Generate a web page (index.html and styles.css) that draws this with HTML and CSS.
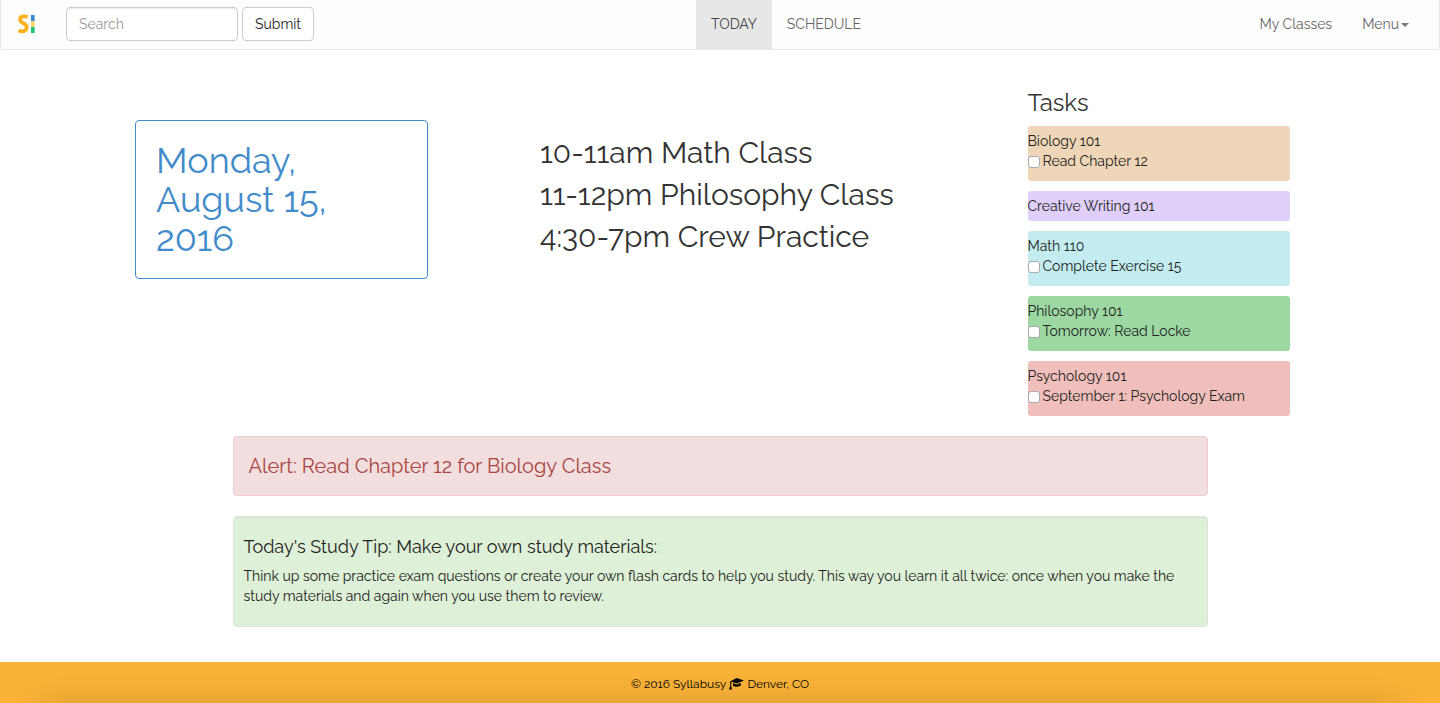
FILE: index.html
```html
<!DOCTYPE html>
<html lang="en">
<head>
<meta charset="utf-8">
<title>Syllabusy</title>
<link rel="stylesheet" href="styles.css">
</head>
<body>
<nav class="navbar">
  <div class="nav-left">
    <a class="brand" href="#" aria-label="Syllabusy">
      <svg width="18" height="20" viewBox="0 0 18 20">
        <path d="M9.6 3.1C7.4 2.1 2.1 1.6 2.1 5.6C2.1 9.8 8.7 8.8 8.7 13.2C8.7 18 3 18 0.6 16.4" fill="none" stroke="#fdb31e" stroke-width="3.8"/>
        <path d="M13 1h3.6v6H13z" fill="#3a87cf"/>
        <path d="M13 7h3.6v6H13z" fill="#fbd96c"/>
        <path d="M13 13h3.6v6H13z" fill="#1cc46f"/>
      </svg>
    </a>
    <form class="search">
      <input class="field" type="text" placeholder="Search" aria-label="Search">
      <button class="submit" type="button">Submit</button>
    </form>
  </div>
  <div class="nav-center">
    <a class="nav-link active" href="#">TODAY</a>
    <a class="nav-link" href="#">SCHEDULE</a>
  </div>
  <div class="nav-right">
    <a class="nav-link" href="#">My Classes</a>
    <a class="nav-link" href="#">Menu<span class="caret"></span></a>
  </div>
</nav>
<main class="container">
  <section class="date-panel">
    <h1 class="date">Monday, August 15, 2016</h1>
  </section>
  <section class="agenda">
    <p class="event">10-11am Math Class</p>
    <p class="event">11-12pm Philosophy Class</p>
    <p class="event">4:30-7pm Crew Practice</p>
  </section>
  <section class="tasks">
    <h2 class="tasks-title">Tasks</h2>
    <div class="task biology">
      <div>Biology 101</div>
      <label class="todo"><input class="check" type="checkbox">Read Chapter 12</label>
    </div>
    <div class="task writing">
      <div>Creative Writing 101</div>
    </div>
    <div class="task math">
      <div>Math 110</div>
      <label class="todo"><input class="check" type="checkbox">Complete Exercise 15</label>
    </div>
    <div class="task philosophy">
      <div>Philosophy 101</div>
      <label class="todo"><input class="check" type="checkbox">Tomorrow: Read Locke</label>
    </div>
    <div class="task psychology">
      <div>Psychology 101</div>
      <label class="todo"><input class="check" type="checkbox">September 1: Psychology Exam</label>
    </div>
  </section>
  <div class="alert" role="alert">Alert: Read Chapter 12 for Biology Class</div>
  <section class="tip">
    <h3 class="tip-title">Today's Study Tip: Make your own study materials:</h3>
    <p class="tip-text">Think up some practice exam questions or create your own flash cards to help you study. This way you learn it all twice: once when you make the study materials and again when you use them to review.</p>
  </section>
</main>
<footer class="footer">
  <span>© 2016 Syllabusy</span>
  <svg width="15" height="12" viewBox="0 0 15 12">
    <path d="M7.6 0L15 2.6L8 5.6L1.2 3.4z"/>
    <path d="M4 5.2L8 6.6L11.8 5V7.6C10.6 9 6 9.2 4 7.8z"/>
    <path d="M1.2 3.4H2.4L2.2 8L3 11.6H0L1.2 8z"/>
  </svg>
  <span>Denver, CO</span>
</footer>
</body>
</html>
```
FILE: styles.css
```css
* { box-sizing: border-box; }

body {
  margin: 0;
  min-height: 100vh;
  display: flex;
  flex-direction: column;
  background: #fff;
  color: #333;
  font: 14px/20px Raleway, Lato, sans-serif;
}

h1, h2, h3, p { margin: 0; font-weight: inherit; }

.navbar {
  display: grid;
  grid-template-columns: 1fr auto 1fr;
  background: #fdfdfd;
  border: 1px solid #e7e7e7;
  border-top: 0;
  border-radius: 0 0 4px 4px;
}

.nav-left { display: flex; align-items: flex-start; padding: 7px 0 7px 17px; }
.brand { display: flex; width: 48px; padding-top: 7px; }
.search { display: flex; gap: 4px; }

.field, .submit {
  height: 34px;
  padding: 6px 12px;
  border: 1px solid #ccc;
  border-radius: 4px;
  background: #fff;
  font: inherit;
}

.field { width: 172px; box-shadow: inset 0 1px 1px rgba(0, 0, 0, .08); }
.field::placeholder { color: #999; }
.submit { width: 72px; padding: 6px 0; color: #222; }

.nav-center, .nav-right { display: flex; }
.nav-center { padding-left: 132px; }
.nav-right { justify-content: flex-end; padding-right: 15px; }
.nav-link { padding: 14px 15px 15px; color: #666; text-decoration: none; }
.active { background: #e7e7e7; color: #444; }

.caret {
  display: inline-block;
  margin-left: 2px;
  vertical-align: middle;
  border: 4px solid transparent;
  border-top-color: #777;
  border-bottom: 0;
}

.container {
  display: grid;
  grid-template-columns: repeat(12, 1fr);
  row-gap: 20px;
  align-items: start;
  align-content: start;
  flex: 1;
  width: 100%;
  max-width: 1170px;
  margin: 0 auto;
  padding: 40px 0 35px;
}

.date-panel {
  grid-column: 1 / span 3;
  margin-top: 30px;
  padding: 20px 80px 20px 20px;
  border: 1px solid #428bca;
  border-radius: 4px;
}

.date { color: #428bca; font-size: 36px; line-height: 39px; }

.agenda { grid-column: 5 / span 5; margin-top: 42px; padding-left: 15px; }
.event { font-size: 30px; line-height: 42px; }

.tasks { grid-column: 10 / span 3; display: grid; gap: 10px; padding: 0 15px; }
.tasks-title { font-size: 24px; line-height: 26px; }
.task { padding: 5px 0; border-radius: 3px; color: #222; }
.todo { display: flex; align-items: center; gap: 3px; margin-bottom: 5px; }

.check {
  appearance: none;
  width: 12px;
  height: 12px;
  margin: 2px 0 0;
  border: 1px solid #aaa;
  border-radius: 3px;
  background: #fff;
}

.check:checked { background: #428bca; }

.biology { background: #f0d6b8; }
.writing { background: #dfcffa; }
.math { background: #c2ecef; }
.philosophy { background: #9dd8a2; }
.psychology { background: #f0bfbc; }

.alert {
  grid-column: 2 / span 10;
  padding: 19px 15px;
  border: 1px solid #ebccd1;
  border-radius: 4px;
  background: #f2dede;
  color: #a94442;
  font-size: 20px;
}

.tip {
  grid-column: 2 / span 10;
  padding: 20px 10px;
  border: 1px solid #dde5da;
  border-radius: 4px;
  background: #dff0d8;
  box-shadow: inset 0 1px 1px rgba(0, 0, 0, .05);
  color: #222;
}

.tip-title { margin-bottom: 9px; font-size: 18px; }

.footer {
  display: flex;
  justify-content: center;
  align-items: center;
  gap: 3px;
  padding: 12px 0 9px;
  background:
    linear-gradient(90deg, #fbb238 10px, transparent 70px calc(100% - 70px), #fbb238 calc(100% - 10px)),
    linear-gradient(#fbb238 15%, #f6af37 55%, #eaa634);
  color: #000;
  font-size: 12px;
}
```
